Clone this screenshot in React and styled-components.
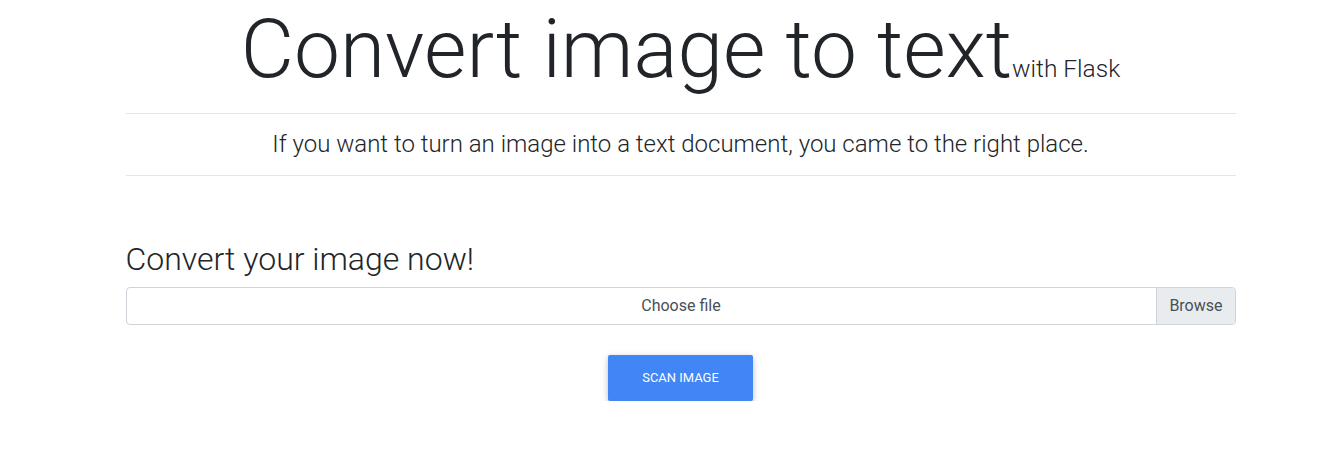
import React from 'react';
import styled, { createGlobalStyle } from 'styled-components';

const GlobalStyle = createGlobalStyle`
  body {
    margin: 0;
    background: #fff;
    font-family: Roboto, "Liberation Sans", sans-serif;
    font-size: 16px;
    color: #212529;
  }
`;

const Container = styled.div`
  width: 1110px;
  margin-left: calc(50% - 541px);
`;

const Title = styled.h1`
  margin: 0;
  text-align: center;
  font-size: 82px;
  font-weight: 300;
  line-height: 1.2;
`;

const Small = styled.small`
  font-size: 24.5px;
  font-weight: 300;
`;

const Rule = styled.hr`
  margin: ${(p) => (p.$flush ? '0' : '15px 0 0')};
  border: 0;
  border-top: 1px solid rgba(0, 0, 0, 0.1);
`;

const Lead = styled.p`
  margin: 0;
  padding: 12px 0 13px;
  text-align: center;
  font-size: 24px;
  font-weight: 300;
  line-height: 1.5;
`;

const Form = styled.div`
  margin-top: 64px;
  display: flex;
  flex-direction: column;
`;

const Heading = styled.h3`
  margin: 0 0 8px;
  font-size: 32px;
  font-weight: 300;
  line-height: 1.2;
`;

const FileInput = styled.label`
  display: flex;
  height: 38px;
  box-sizing: border-box;
  border: 1px solid #ced4da;
  border-radius: 4px;
  overflow: hidden;
  color: #495057;
  font-size: 16px;
  line-height: 1.5;
`;

const FileText = styled.span`
  flex: 1;
  display: flex;
  align-items: center;
  justify-content: center;
  padding-left: 79px;
`;

const Browse = styled.span`
  display: flex;
  align-items: center;
  padding: 0 12px;
  background: #e9ecef;
  border-left: 1px solid #ced4da;
`;

const ButtonRow = styled.div`
  display: flex;
  justify-content: center;
  margin-top: 30px;
`;

const Button = styled.button`
  width: 145px;
  height: 46px;
  border: 0;
  border-radius: 2px;
  background: #4285f4;
  color: #fff;
  font-family: Roboto, "Liberation Sans", sans-serif;
  font-size: 12.96px;
  text-transform: uppercase;
  box-shadow: 0 2px 5px 0 rgba(0, 0, 0, 0.16), 0 2px 10px 0 rgba(0, 0, 0, 0.12);
`;

export default function App() {
  return (
    <>
      <GlobalStyle />
      <Container>
        <Title>
          Convert image to text<Small>with Flask</Small>
        </Title>
        <Rule />
        <Lead>If you want to turn an image into a text document, you came to the right place.</Lead>
        <Rule $flush />
        <Form>
          <Heading>Convert your image now!</Heading>
          <FileInput>
            <FileText>Choose file</FileText>
            <Browse>Browse</Browse>
          </FileInput>
          <ButtonRow>
            <Button>Scan image</Button>
          </ButtonRow>
        </Form>
      </Container>
    </>
  );
}
